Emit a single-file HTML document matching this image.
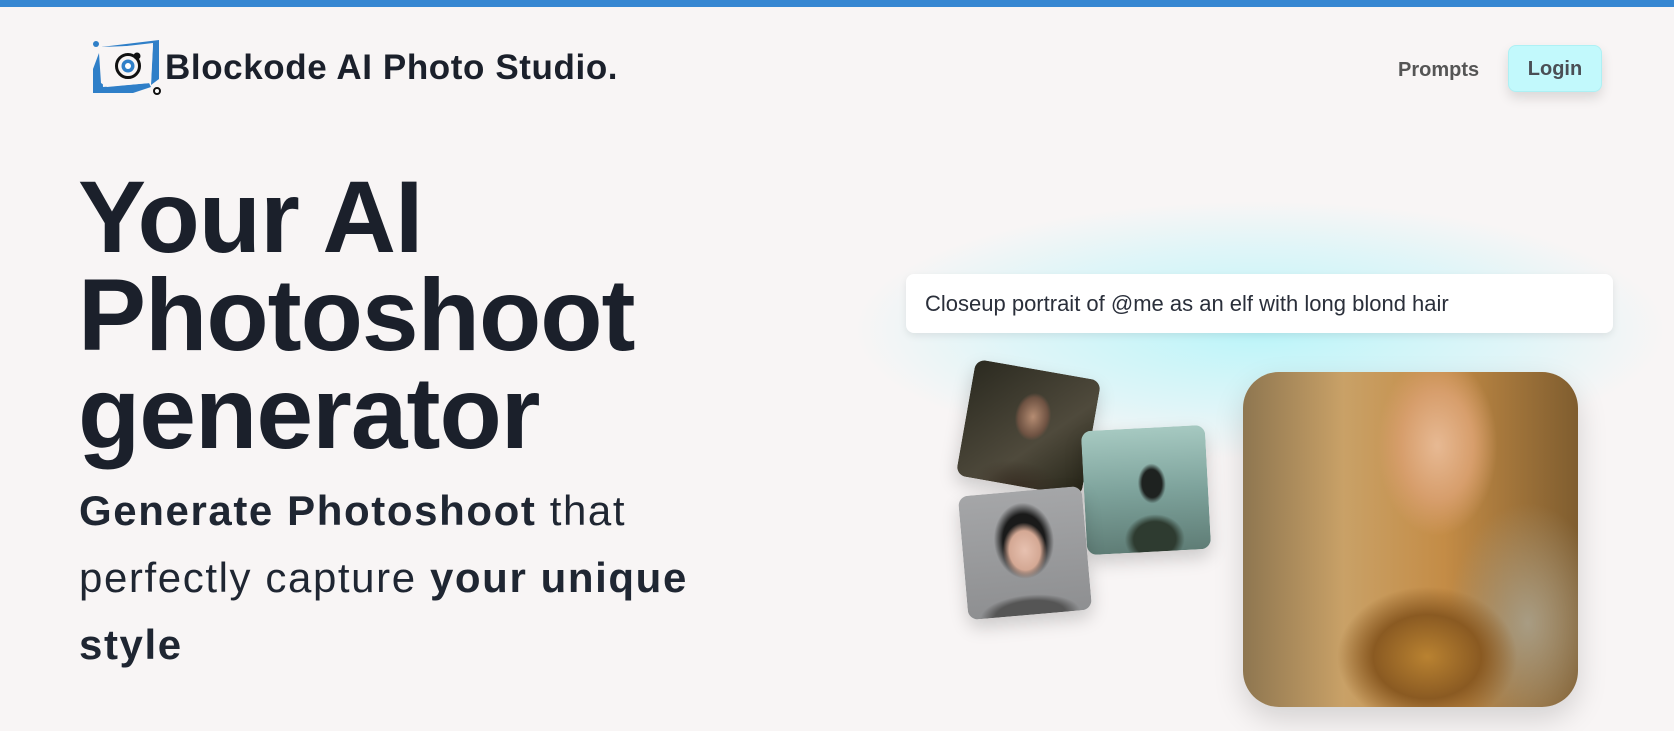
<!DOCTYPE html>
<html><head><meta charset="utf-8"><style>
*{margin:0;padding:0;box-sizing:border-box}
body{width:1674px;height:731px;overflow:hidden;background:#f8f5f5;font-family:"Liberation Sans",sans-serif;color:#1b202b;position:relative}
.top{position:absolute;left:0;top:0;width:100%;height:7px;background:#3787d2}
.brand{position:absolute;left:165px;top:48px;font-size:35px;font-weight:bold;letter-spacing:0.6px;color:#1b202b}
.nav{position:absolute;left:1398px;top:59px;font-size:20px;font-weight:bold;color:#555}
.login{position:absolute;left:1508px;top:45px;width:94px;height:47px;border-radius:8px;background:#c2f9fc;border:1px solid #aef0f4;box-shadow:0 6px 12px rgba(0,0,0,.12);font-size:20px;font-weight:bold;color:#4a4f55;text-align:center;line-height:47px}
h1{position:absolute;left:78px;top:168px;font-size:102px;line-height:98px;font-weight:900;letter-spacing:-1px;color:#1b202b}
.sub{position:absolute;left:79px;top:477px;font-size:42px;line-height:67px;color:#1f2632;letter-spacing:1.6px;width:690px}
.sub b{font-weight:bold}
.glow{position:absolute;left:850px;top:200px;width:820px;height:260px;border-radius:50%;background:radial-gradient(ellipse at center,rgba(180,245,250,.9) 0%,rgba(200,245,250,.5) 45%,rgba(248,245,245,0) 70%)}
.input{position:absolute;left:906px;top:274px;width:707px;height:59px;background:#fff;border-radius:8px;box-shadow:0 3px 8px rgba(0,0,0,.08);font-size:22px;color:#2a2f3a;padding-left:19px;line-height:59px}
.card{position:absolute;border-radius:10px;box-shadow:0 8px 18px rgba(0,0,0,.18);overflow:hidden}
.big{position:absolute;left:1243px;top:372px;width:335px;height:335px;border-radius:36px;box-shadow:0 12px 30px rgba(0,0,0,.15);
background:radial-gradient(ellipse 60px 90px at 58% 22%,#e7b993 0%,#d79e6c 60%,transparent 100%),radial-gradient(ellipse 90px 70px at 55% 85%,#b98231 0%,#8a5a22 60%,transparent 100%),radial-gradient(ellipse 80px 120px at 85% 75%,#a89c83 0%,transparent 100%),linear-gradient(90deg,#8e7650 0%,#c9a167 30%,#c48c46 60%,#7f5d2f 100%)}
</style></head><body>
<div class="top"></div>
<svg style="position:absolute;left:89px;top:39px" width="76" height="58" viewBox="0 0 76 58">
<path d="M12 8 L70 1 L70 40 L62 46 L64 6 Z" fill="#2f7fc8"/>
<path d="M10 14 L4 30 L4 54 L44 54 L62 48 L60 44 L18 48 L12 44 Z" fill="#2f7fc8"/>
<path d="M12 10 L64 4 L62 44 L14 48 Z" fill="#f8f5f5"/>
<circle cx="7" cy="5" r="3" fill="#2f7fc8"/>
<circle cx="39" cy="27" r="11.5" fill="none" stroke="#111" stroke-width="3"/>
<circle cx="39" cy="27" r="6.5" fill="#2f7fc8"/>
<circle cx="39" cy="27" r="3" fill="#fff"/>
<circle cx="48" cy="17" r="3.5" fill="#111"/>
<circle cx="68" cy="52" r="3" fill="#fff" stroke="#111" stroke-width="2"/>
</svg>
<div class="brand">Blockode AI Photo Studio.</div>
<div class="nav">Prompts</div>
<div class="login">Login</div>
<h1>Your AI<br>Photoshoot<br>generator</h1>
<div class="sub"><b>Generate Photoshoot</b> that perfectly capture <b>your unique style</b></div>
<div class="glow"></div>
<div class="input">Closeup portrait of @me as an elf with long blond hair</div>
<div class="card" style="left:965px;top:369px;width:127px;height:118px;transform:rotate(10deg);background:radial-gradient(ellipse 18px 24px at 52% 40%,#b58c72 0%,#6e5242 80%,transparent 100%),radial-gradient(ellipse 45px 25px at 50% 100%,#3a3025 0%,transparent 100%),linear-gradient(135deg,#2b2a20,#4f4a3c 60%,#252417)"></div>
<div class="card" style="left:1084px;top:428px;width:124px;height:124px;transform:rotate(-3deg);background:radial-gradient(ellipse 30px 25px at 55% 90%,#2e3b30 0%,#2e3b30 70%,transparent 100%),radial-gradient(ellipse 14px 20px at 55% 45%,#1e2220 0%,#1e2220 70%,transparent 100%),linear-gradient(180deg,#a6c9c1 0%,#7ea39c 50%,#5f7d76 100%)"></div>
<div class="card" style="left:963px;top:491px;width:124px;height:124px;transform:rotate(-5deg);background:radial-gradient(ellipse 22px 28px at 50% 48%,#e7c1b0 0%,#d4a894 70%,transparent 100%),radial-gradient(ellipse 30px 38px at 50% 40%,#1a1a1a 0%,#1a1a1a 70%,transparent 100%),radial-gradient(ellipse 50px 20px at 50% 100%,#555 0%,#555 70%,transparent 100%),linear-gradient(180deg,#a5a6a8,#8e8f91)"></div>
<div class="big"></div>
</body></html>
